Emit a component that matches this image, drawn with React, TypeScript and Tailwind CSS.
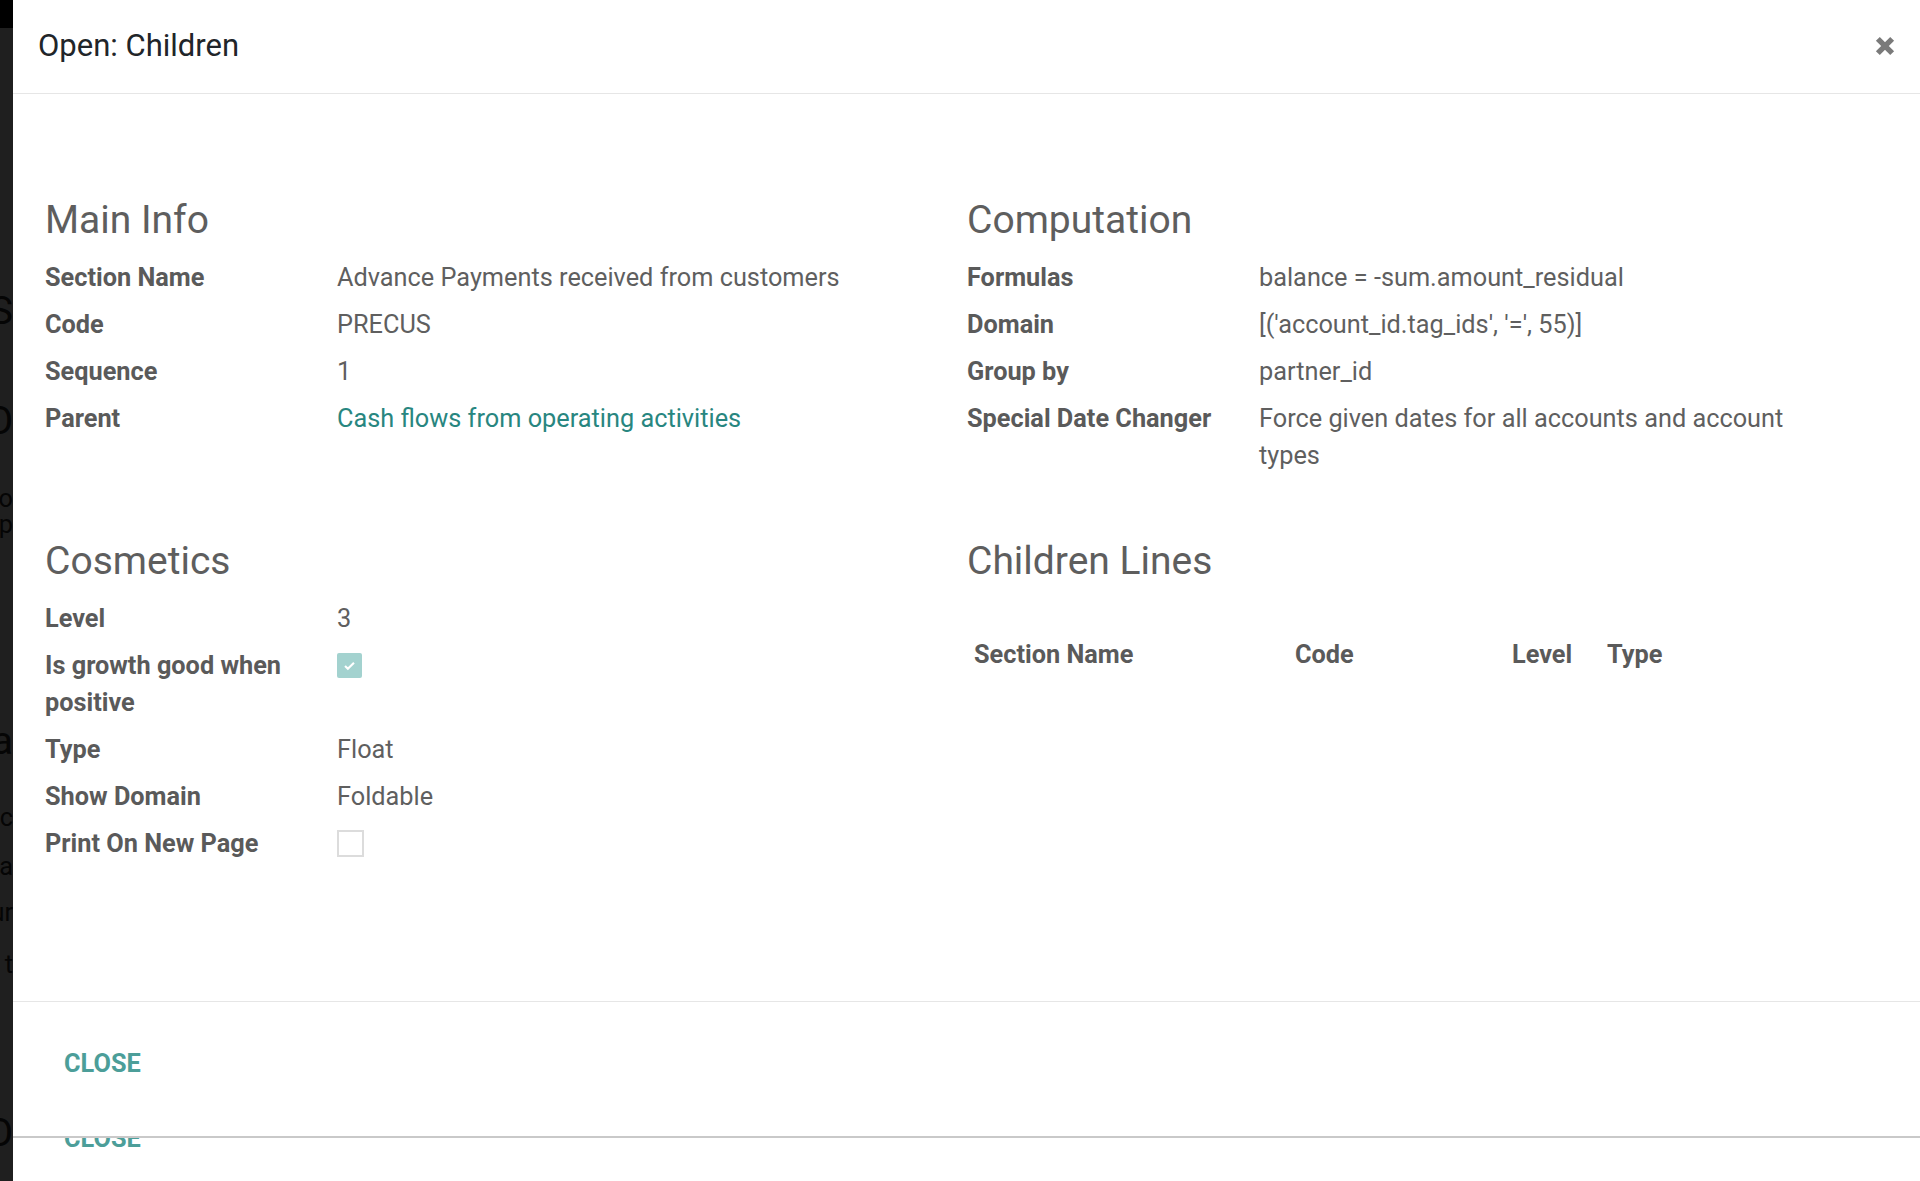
import type { ReactNode } from 'react';

function Field({ label, children }: { label: string; children: ReactNode }) {
  return (
    <div className="flex py-[5px]">
      <div className="w-[292px] shrink-0 pr-[36px] font-bold leading-[37px] text-[#5a5a5a]">{label}</div>
      <div className="flex-1 leading-[37px] text-[#5f5f5f]">{children}</div>
    </div>
  );
}

function Heading({ children }: { children: ReactNode }) {
  return <h2 className="mb-[10px] text-[39px] leading-[47px] text-[#5e5e5e]">{children}</h2>;
}

function Checkbox({ checked }: { checked?: boolean }) {
  return (
    <div className="flex h-[37px] items-center">
      {checked ? (
        <div className="flex h-[25px] w-[25px] items-center justify-center rounded-[2px] bg-[#a3d2cf]">
          <svg viewBox="0 0 16 16" className="h-[13px] w-[13px]">
            <path d="M2.5 8.5l3.5 3.5 7.5-7.5" fill="none" stroke="#ffffff" strokeWidth="2.6" />
          </svg>
        </div>
      ) : (
        <div className="h-[27px] w-[27px] border-2 border-[#dcdcdc] bg-white" />
      )}
    </div>
  );
}

export default function App() {
  return (
    <div className="flex h-[1181px] w-full overflow-hidden bg-white font-[family-name:Roboto,'Liberation_Sans',sans-serif] text-[25.3px]">
      {/* backdrop strip peeking out on the left */}
      <div className="flex w-[13px] shrink-0 flex-col overflow-hidden bg-[#1f1f1f] text-[#050505]">
        <div className="h-[28px] shrink-0 bg-black" />
        <div className="mt-[260px] flex h-[47px] shrink-0 items-center justify-end whitespace-nowrap text-[39px]">S</div>
        <div className="mt-[63px] flex h-[47px] shrink-0 items-center justify-end whitespace-nowrap text-[39px]">O</div>
        <div className="mt-[41px] flex h-[26px] shrink-0 items-center justify-end whitespace-nowrap">o</div>
        <div className="flex h-[26px] shrink-0 items-center justify-end whitespace-nowrap">p</div>
        <div className="mt-[180px] flex h-[47px] shrink-0 items-center justify-end whitespace-nowrap text-[39px]">a</div>
        <div className="mt-[40px] flex h-[26px] shrink-0 items-center justify-end whitespace-nowrap">c</div>
        <div className="mt-[23px] flex h-[26px] shrink-0 items-center justify-end whitespace-nowrap">a</div>
        <div className="mt-[20px] flex h-[26px] shrink-0 items-center justify-end whitespace-nowrap">ur</div>
        <div className="mt-[26px] flex h-[26px] shrink-0 items-center justify-end whitespace-nowrap">t</div>
        <div className="mt-[132px] flex h-[47px] shrink-0 items-center justify-end whitespace-nowrap text-[39px]">O</div>
      </div>

      <div className="flex min-w-0 flex-1 flex-col">
        {/* header */}
        <div className="flex h-[94px] shrink-0 items-center justify-between border-b border-[#e6e6e6] pb-[2px] pl-[25px] pr-[23px]">
          <h1 className="text-[31px] leading-[40px] text-[#212529]">Open: Children</h1>
          <button className="flex h-[24px] w-[24px] items-center justify-center">
            <svg viewBox="0 0 20 20" className="h-[22px] w-[22px]">
              <path d="M3.5 3.5l13 13M16.5 3.5l-13 13" stroke="#7a7a7a" strokeWidth="5" />
            </svg>
          </button>
        </div>

        {/* body */}
        <div className="flex-1 pl-[32px] pr-[31px] pt-[103px]">
          <div className="grid grid-cols-2">
            <div>
              <Heading>Main Info</Heading>
              <Field label="Section Name">Advance Payments received from customers</Field>
              <Field label="Code">PRECUS</Field>
              <Field label="Sequence">1</Field>
              <Field label="Parent">
                <span className="text-[#288680]">Cash flows from operating activities</span>
              </Field>
            </div>
            <div>
              <Heading>Computation</Heading>
              <Field label="Formulas">balance = -sum.amount_residual</Field>
              <Field label="Domain">[('account_id.tag_ids', '=', 55)]</Field>
              <Field label="Group by">partner_id</Field>
              <Field label="Special Date Changer">
                <div className="max-w-[560px]">Force given dates for all accounts and account types</div>
              </Field>
            </div>

            <div className="mt-[59px]">
              <Heading>Cosmetics</Heading>
              <Field label="Level">3</Field>
              <Field label="Is growth good when positive">
                <Checkbox checked />
              </Field>
              <Field label="Type">Float</Field>
              <Field label="Show Domain">Foldable</Field>
              <Field label="Print On New Page">
                <Checkbox />
              </Field>
            </div>
            <div className="mt-[59px]">
              <Heading>Children Lines</Heading>
              <div className="mt-[46px] grid grid-cols-[321px_217px_95px_1fr] py-[5px] font-bold leading-[37px] text-[#5a5a5a]">
                <div className="px-[7px]">Section Name</div>
                <div className="px-[7px]">Code</div>
                <div className="px-[7px]">Level</div>
                <div className="px-[7px]">Type</div>
              </div>
            </div>
          </div>
        </div>

        {/* footer */}
        <div className="h-[135px] shrink-0 border-t border-[#e6e6e6] pl-[51px] pt-[43px]">
          <button className="font-bold leading-[37px] text-[#4c9e99]">CLOSE</button>
        </div>
        <div className="h-[2px] shrink-0 bg-[#c9c9c9]" />
        <div className="h-[43px] shrink-0 overflow-hidden pl-[51px]">
          <div className="-mt-[18px] font-bold leading-[37px] text-[#4c9e99]">CLOSE</div>
        </div>
      </div>
    </div>
  );
}
